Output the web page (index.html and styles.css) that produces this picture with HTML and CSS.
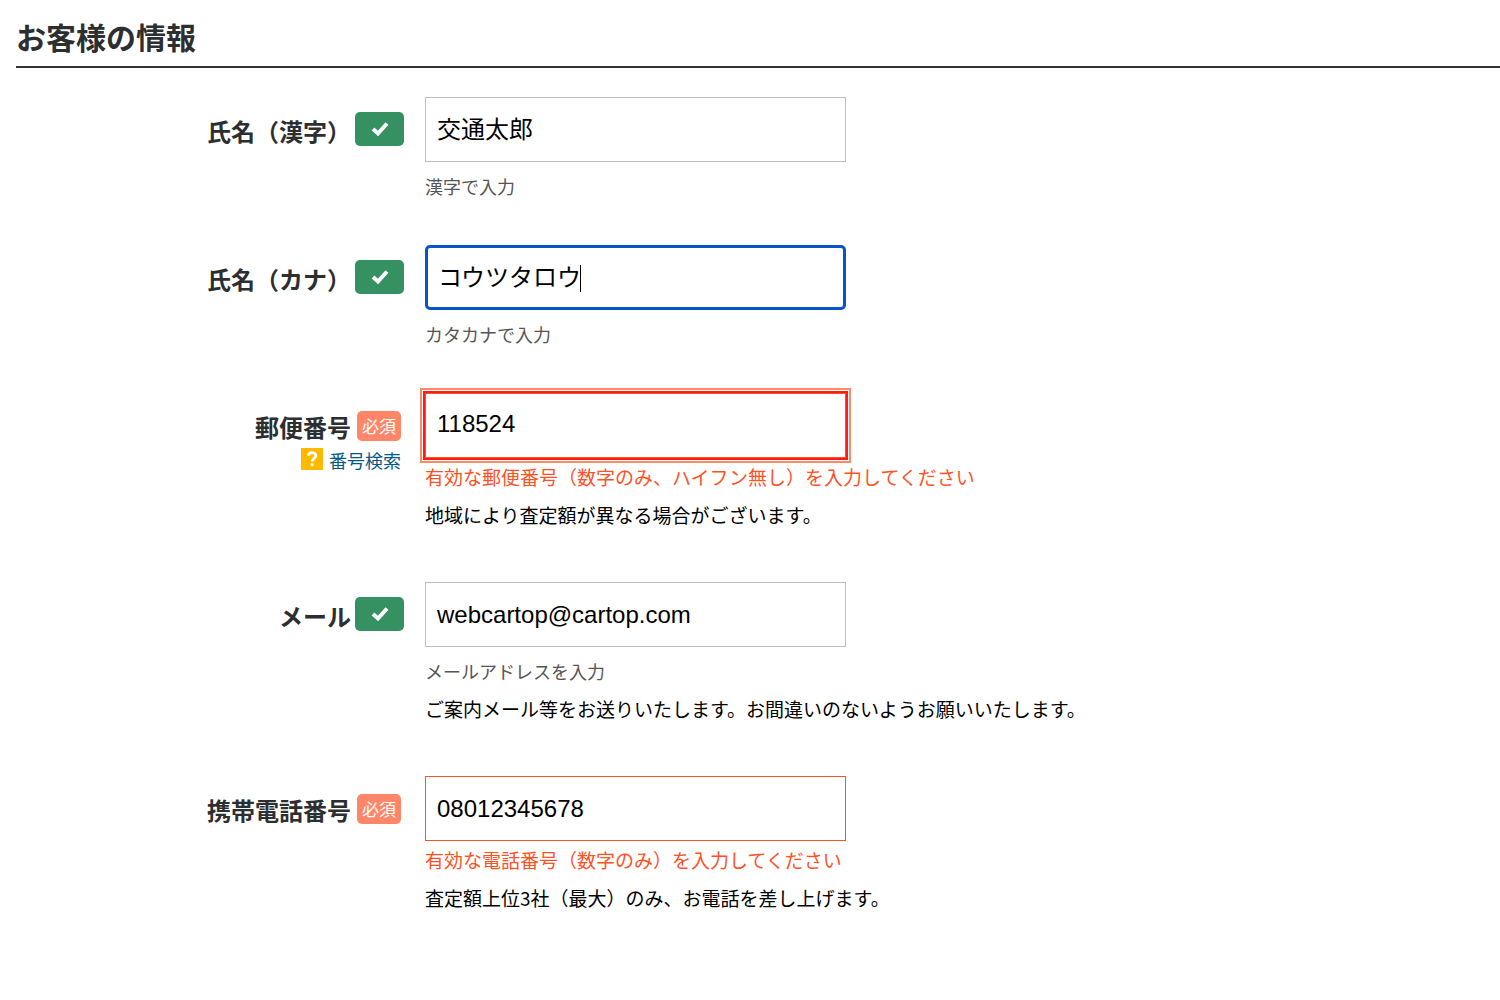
FILE: index.html
```html
<!DOCTYPE html>
<html lang="ja">
<head>
<meta charset="utf-8">
<meta name="viewport" content="width=device-width, initial-scale=1">
<title>お客様の情報</title>
<link rel="stylesheet" href="styles.css">
</head>
<body>
<main class="page">
  <h1 class="title">お客様の情報</h1>
  <form class="form">
    <div class="row">
      <div class="side">
        <div class="heading">
          <label class="label" for="kanji">氏名（漢字）</label>
          <span class="ok"><svg class="check" viewBox="0 0 18 15" role="img" aria-label="入力済み"><path d="M2 7 L7 11.500 L16 1.500" /></svg></span>
        </div>
      </div>
      <div class="field">
        <input class="input input-raised" id="kanji" type="text" value="交通太郎">
        <p class="hint">漢字で入力</p>
      </div>
    </div>

    <div class="row">
      <div class="side">
        <div class="heading">
          <label class="label" for="kana">氏名（カナ）</label>
          <span class="ok"><svg class="check" viewBox="0 0 18 15" role="img" aria-label="入力済み"><path d="M2 7 L7 11.500 L16 1.500" /></svg></span>
        </div>
      </div>
      <div class="field">
        <div class="active">
          <input class="input input-active" id="kana" type="text" value="コウツタロウ">
          <span class="caret"></span>
        </div>
        <p class="hint">カタカナで入力</p>
      </div>
    </div>

    <div class="row">
      <div class="side">
        <div class="heading heading-required">
          <label class="label" for="zip">郵便番号</label>
          <span class="required">必須</span>
        </div>
        <a class="search" href="#"><svg class="help" viewBox="0 0 22 22" aria-hidden="true"><rect width="22" height="22" fill="#ffba00"/><path d="M7.500 7.800 C7.500 3.600 14.800 3.600 14.800 7.800 C14.800 10.600 11.200 10.400 11.200 13.600" fill="none" stroke="#fff" stroke-width="2.800"/><rect x="9.700" y="15.300" width="3" height="3" rx="1" fill="#fff"/></svg>番号検索</a>
      </div>
      <div class="field">
        <input class="input input-raised input-alert" id="zip" type="text" inputmode="numeric" value="118524">
        <p class="error">有効な郵便番号（数字のみ、ハイフン無し）を入力してください</p>
        <p class="note">地域により査定額が異なる場合がございます。</p>
      </div>
    </div>

    <div class="row">
      <div class="side">
        <div class="heading">
          <label class="label" for="mail">メール</label>
          <span class="ok"><svg class="check" viewBox="0 0 18 15" role="img" aria-label="入力済み"><path d="M2 7 L7 11.500 L16 1.500" /></svg></span>
        </div>
      </div>
      <div class="field">
        <input class="input" id="mail" type="email" value="webcartop@cartop.com">
        <p class="hint">メールアドレスを入力</p>
        <p class="note">ご案内メール等をお送りいたします。お間違いのないようお願いいたします。</p>
      </div>
    </div>

    <div class="row">
      <div class="side">
        <div class="heading heading-required">
          <label class="label" for="tel">携帯電話番号</label>
          <span class="required">必須</span>
        </div>
      </div>
      <div class="field">
        <input class="input input-error" id="tel" type="tel" value="08012345678">
        <p class="error">有効な電話番号（数字のみ）を入力してください</p>
        <p class="note">査定額上位3社（最大）のみ、お電話を差し上げます。</p>
      </div>
    </div>
  </form>
</main>
</body>
</html>
```
FILE: styles.css
```css
* {
  box-sizing: border-box;
}

body {
  margin: 0;
  background: #fff;
  color: #000;
  font-family: "Noto Sans CJK JP", sans-serif;
}

p {
  margin: 0;
}

.page {
  padding: 16px 0 40px 16px;
}

.title {
  margin: 0;
  padding-bottom: 10px;
  border-bottom: 2px solid #333;
  color: #2d2e30;
  font-size: 30px;
  font-weight: 700;
  line-height: 40px;
}

.form {
  display: flex;
  flex-direction: column;
  gap: 46px;
  padding-top: 29px;
}

.row {
  display: grid;
  grid-template-columns: 388px 1fr;
  gap: 21px;
}

.side {
  display: flex;
  flex-direction: column;
  align-items: flex-end;
  padding-top: 15px;
}

.heading {
  display: flex;
  align-items: center;
  gap: 4px;
  height: 34px;
}

.heading-required {
  gap: 6px;
}

.label {
  padding-top: 4px;
  color: #2d2e30;
  font-size: 24px;
  font-weight: 700;
  line-height: 34px;
}

.ok {
  display: flex;
  align-items: center;
  justify-content: center;
  width: 49px;
  height: 34px;
  border-radius: 5px;
  background: #359062;
}

.check {
  width: 18px;
  height: 15px;
  fill: none;
  stroke: #fff;
  stroke-width: 4;
}

.required {
  margin-top: 2px;
  margin-right: 3px;
  padding: 0 5px;
  border-radius: 5px;
  background: #ff8669;
  color: #fff;
  font-size: 17px;
  line-height: 30px;
}

.search {
  display: flex;
  align-items: flex-start;
  gap: 6px;
  margin-top: 6px;
  margin-right: 3px;
  color: #055a85;
  font-size: 18px;
  line-height: 24px;
  text-decoration: none;
}

.help {
  width: 22px;
  height: 22px;
}

.field {
  display: flex;
  flex-direction: column;
}

.input {
  width: 421px;
  max-width: 100%;
  height: 65px;
  padding: 0 11px;
  border: 1px solid #bfbfbf;
  border-radius: 0;
  outline: 0;
  background: #fff;
  color: #000;
  font-family: "Liberation Sans", "Noto Sans CJK JP", sans-serif;
  font-size: 24px;
}

.input-raised {
  padding-bottom: 4px;
}

.active {
  display: flex;
  position: relative;
}

.input-active {
  padding: 0 9px 4px 10px;
  border: 3px solid #0754cb;
  border-radius: 5px;
}

.caret {
  position: absolute;
  top: 20px;
  left: 155px;
  width: 1px;
  height: 27px;
  background: #000;
}

.input-alert {
  border: 1px solid #ff5126;
  box-shadow: 0 0 0 2px #ff1a16, 0 0 0 3px #fff, 0 0 0 5px #ff8a66;
}

.input-error {
  border: 1px solid #ff5126;
}

.hint {
  margin-top: 12px;
  color: #555;
  font-size: 18px;
  line-height: 25px;
}

.error {
  margin-top: 5px;
  color: #ff5126;
  font-size: 19px;
  line-height: 27px;
}

.note {
  margin-top: 12px;
  padding-bottom: 8px;
  font-size: 19px;
  line-height: 26px;
}
```
